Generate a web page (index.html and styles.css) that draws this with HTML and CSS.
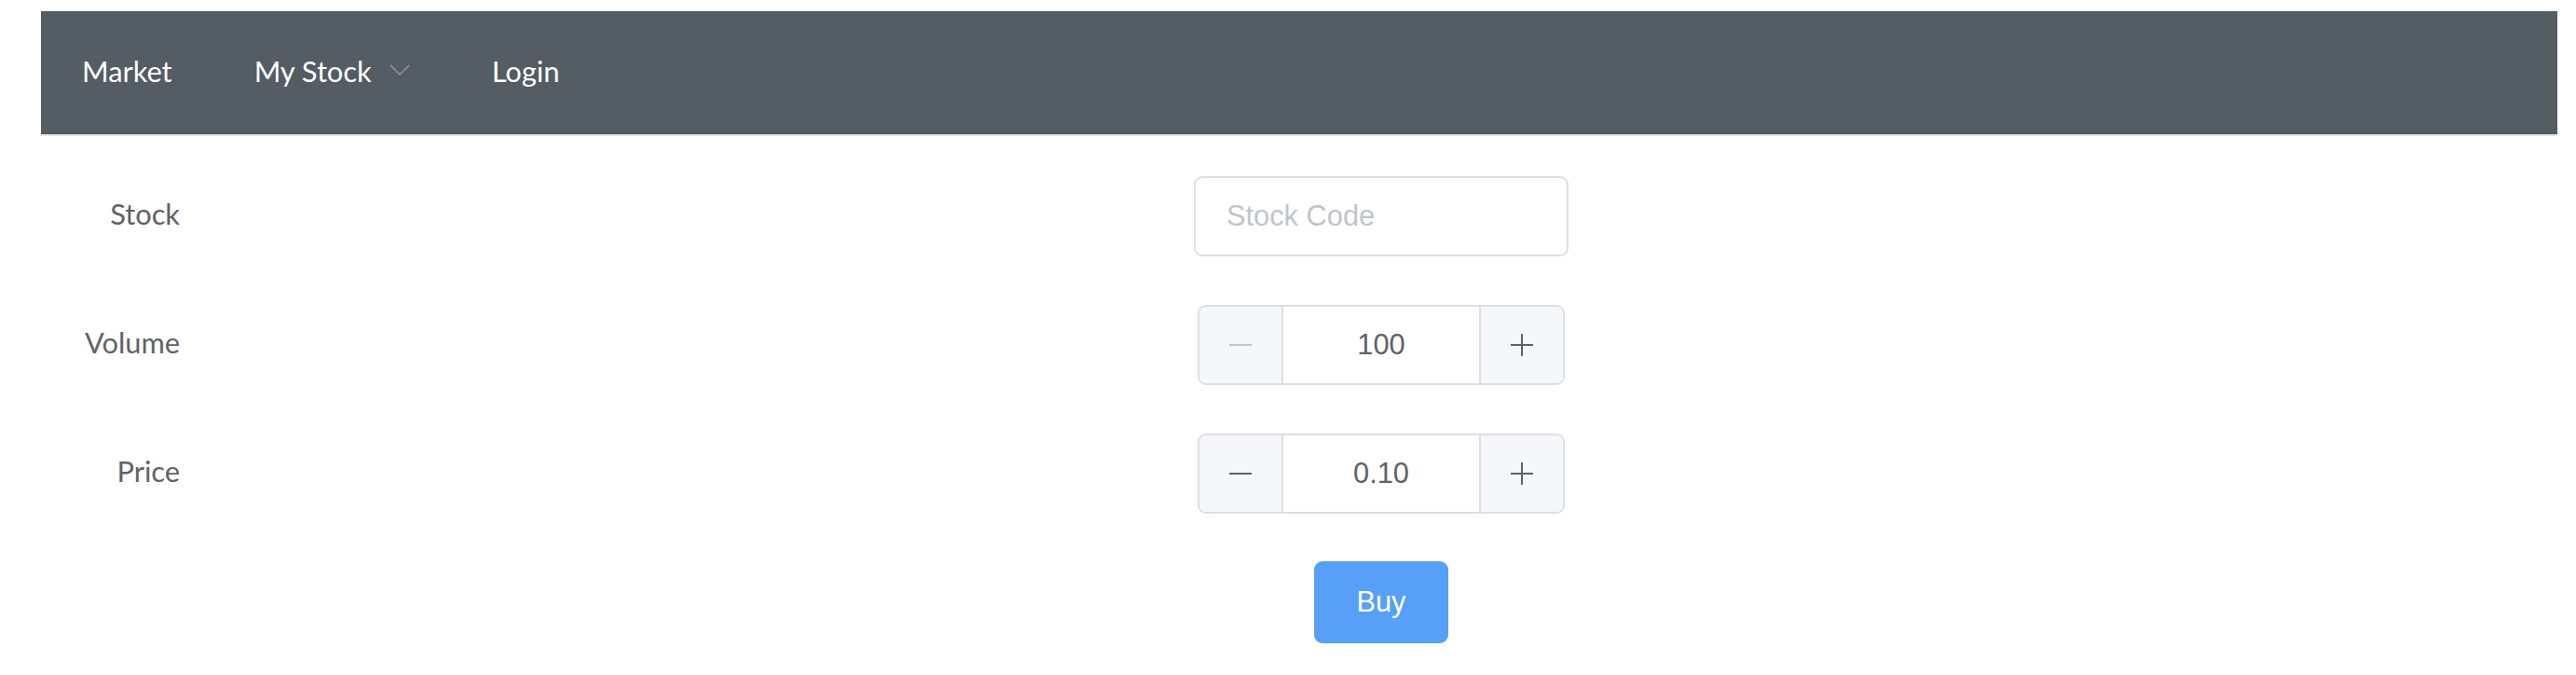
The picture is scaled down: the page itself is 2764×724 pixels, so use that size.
FILE: index.html
```html
<!DOCTYPE html>
<html>
<head>
<meta charset="utf-8">
<link rel="stylesheet" href="styles.css">
</head>
<body>
<div class="app">
  <nav class="menu">
    <div class="menu-item">Market</div>
    <div class="menu-item submenu">My Stock
      <svg class="arrow" width="22" height="12" viewBox="0 0 22 12"><polyline points="1,1 11,11 21,1" fill="none" stroke="#909399" stroke-width="1.5"/></svg>
    </div>
    <div class="menu-item">Login</div>
  </nav>
  <form class="form">
    <div class="form-item">
      <label class="label">Stock</label>
      <div class="content">
        <input class="text-input" type="text" placeholder="Stock Code">
      </div>
    </div>
    <div class="form-item">
      <label class="label">Volume</label>
      <div class="content">
        <div class="number-input">
          <span class="btn dec disabled"><svg width="24" height="24" viewBox="0 0 24 24"><line x1="0" y1="12" x2="24" y2="12" stroke="currentColor" stroke-width="2"/></svg></span>
          <span class="value">100</span>
          <span class="btn inc"><svg width="24" height="24" viewBox="0 0 24 24"><line x1="0" y1="12" x2="24" y2="12" stroke="currentColor" stroke-width="2"/><line x1="12" y1="0" x2="12" y2="24" stroke="currentColor" stroke-width="2"/></svg></span>
        </div>
      </div>
    </div>
    <div class="form-item">
      <label class="label">Price</label>
      <div class="content">
        <div class="number-input">
          <span class="btn dec"><svg width="24" height="24" viewBox="0 0 24 24"><line x1="0" y1="12" x2="24" y2="12" stroke="currentColor" stroke-width="2"/></svg></span>
          <span class="value">0.10</span>
          <span class="btn inc"><svg width="24" height="24" viewBox="0 0 24 24"><line x1="0" y1="12" x2="24" y2="12" stroke="currentColor" stroke-width="2"/><line x1="12" y1="0" x2="12" y2="24" stroke="currentColor" stroke-width="2"/></svg></span>
        </div>
      </div>
    </div>
    <div class="form-item">
      <span class="label"></span>
      <div class="content">
        <button class="buy" type="button">Buy</button>
      </div>
    </div>
  </form>
</div>
</body>
</html>
```
FILE: styles.css
```css
html, body {
  margin: 0;
  padding: 0;
  background: #fff;
}
.app {
  padding: 12px 20px 0 44px;
  font-family: Lato, "Noto Sans", sans-serif;
}
.menu {
  display: flex;
  height: 132px;
  background: #545c64;
  border-bottom: 2px solid #e6e6e6;
}
.menu-item {
  display: flex;
  align-items: center;
  padding: 0 44px 4px;
  color: #fff;
  font-size: 30.8px;
}
.submenu .arrow {
  margin-left: 19px;
  margin-top: -2px;
}
.form {
  margin-top: 42px;
}
.form-item {
  display: flex;
  height: 88px;
  margin-bottom: 50px;
}
.label {
  width: 176px;
  box-sizing: border-box;
  padding-right: 27px;
  text-align: right;
  line-height: 84px;
  font-size: 30.8px;
  color: #606266;
}
.content {
  flex: 1;
  display: flex;
  justify-content: center;
  align-items: center;
}
.text-input {
  width: 402px;
  height: 86px;
  box-sizing: border-box;
  border: 2px solid #dcdfe6;
  border-radius: 9px;
  padding: 0 33px;
  font-family: "Liberation Sans", Arial, sans-serif;
  font-size: 30.8px;
  color: #606266;
  outline: none;
}
.text-input::placeholder {
  color: #c0c4cc;
}
.number-input {
  display: flex;
  width: 394px;
  height: 86px;
  box-sizing: border-box;
  border: 2px solid #dcdfe6;
  border-radius: 9px;
  overflow: hidden;
}
.btn {
  width: 88px;
  display: flex;
  align-items: center;
  justify-content: center;
  background: #f5f7fa;
  color: #606266;
}
.btn.disabled {
  color: #c0c4cc;
}
.dec {
  border-right: 2px solid #dcdfe6;
}
.inc {
  border-left: 2px solid #dcdfe6;
}
.value {
  flex: 1;
  display: flex;
  align-items: center;
  justify-content: center;
  font-family: "Liberation Sans", Arial, sans-serif;
  font-size: 30.8px;
  color: #606266;
}
.buy {
  width: 144px;
  height: 88px;
  border: none;
  border-radius: 9px;
  background: #589ff8;
  color: #fff;
  font-family: "Liberation Sans", Arial, sans-serif;
  font-size: 30.8px;
  padding: 0;
}
```
